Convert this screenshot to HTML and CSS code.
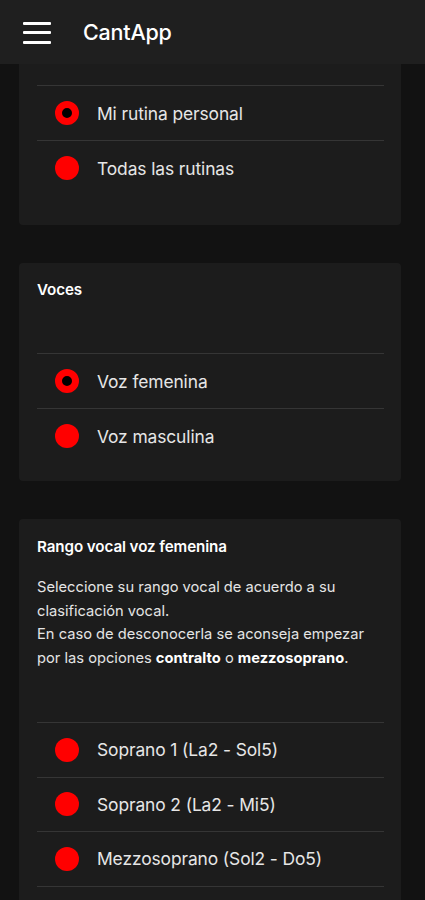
FILE: index.html
```html
<!DOCTYPE html>
<html lang="es">
<head>
<meta charset="utf-8">
<title>CantApp</title>
<link rel="stylesheet" href="styles.css">
</head>
<body>
<header class="toolbar">
  <button class="menu-btn" aria-label="Menú">
    <span class="bar"></span><span class="bar"></span><span class="bar"></span>
  </button>
  <h1 class="app-title">CantApp</h1>
</header>
<main class="content">
  <section class="card card-routines">
    <ul class="radio-list">
      <li class="radio-row"><span class="radio checked"></span><span class="label">Mi rutina personal</span></li>
      <li class="radio-row"><span class="radio"></span><span class="label">Todas las rutinas</span></li>
    </ul>
  </section>

  <section class="card card-voices">
    <h2 class="card-title">Voces</h2>
    <ul class="radio-list">
      <li class="radio-row"><span class="radio checked"></span><span class="label">Voz femenina</span></li>
      <li class="radio-row"><span class="radio"></span><span class="label">Voz masculina</span></li>
    </ul>
  </section>

  <section class="card card-range">
    <h2 class="card-title">Rango vocal voz femenina</h2>
    <p class="card-desc">Seleccione su rango vocal de acuerdo a su clasificación vocal.<br>En caso de desconocerla se aconseja empezar por las opciones <b class="em">contralto</b> o <b class="em">mezzosoprano</b>.</p>
    <ul class="radio-list open-end">
      <li class="radio-row"><span class="radio"></span><span class="label">Soprano 1 (La2 - Sol5)</span></li>
      <li class="radio-row"><span class="radio"></span><span class="label">Soprano 2 (La2 - Mi5)</span></li>
      <li class="radio-row"><span class="radio"></span><span class="label">Mezzosoprano (Sol2 - Do5)</span></li>
    </ul>
  </section>
</main>
</body>
</html>
```

FILE: styles.css
```css
* { box-sizing: border-box; }

html, body {
  margin: 0;
  padding: 0;
}

body {
  background: #121212;
  color: #ececec;
  font-family: "Inter", "Roboto", "Liberation Sans", sans-serif;
  height: 900px;
  overflow: hidden;
}

.toolbar {
  height: 64px;
  background: #1f1f1f;
  display: flex;
  align-items: center;
  padding-left: 23px;
  gap: 32px;
}

.menu-btn {
  width: 28px;
  height: 22px;
  padding: 0;
  border: 0;
  background: transparent;
  display: flex;
  flex-direction: column;
  justify-content: space-between;
  margin-top: 1px;
}

.menu-btn .bar {
  display: block;
  height: 3px;
  width: 28px;
  background: #ffffff;
  border-radius: 1px;
}

.app-title {
  margin: 0;
  font-size: 21.5px;
  font-weight: 500;
  color: #ffffff;
  letter-spacing: -0.2px;
}

.content {
  padding: 0 24px 0 19px;
  display: flex;
  flex-direction: column;
  gap: 38px;
}

.card {
  background: #1c1c1c;
  border-radius: 4px;
  padding: 18px 17px 18px 18px;
}

.card-routines {
  border-radius: 0 0 4px 4px;
  padding-top: 21px;
  padding-bottom: 30px;
}

.card-voices {
  padding-top: 18px;
  padding-bottom: 18px;
}

.card-title {
  margin: 0;
  font-size: 15.2px;
  line-height: 18px;
  font-weight: 600;
  color: #ffffff;
  letter-spacing: -0.1px;
}

.card-voices .card-title {
  margin-bottom: 54px;
}

.card-range {
  padding-top: 19px;
  padding-bottom: 60px;
}

.card-desc {
  margin: 20px 0 52px;
  font-size: 14.7px;
  line-height: 23.5px;
  color: #e4e4e4;
}

.card-desc .em {
  font-weight: 700;
  color: #ffffff;
}

.radio-list {
  list-style: none;
  margin: 0;
  padding: 0;
}

.radio-list.open-end {
  border-bottom: 1px solid #353535;
}

.radio-row {
  display: flex;
  align-items: center;
  gap: 18px;
  height: 55px;
  padding-left: 18px;
  border-top: 1px solid #353535;
}

.card-range .radio-row {
  height: 54.5px;
}

.radio {
  width: 24px;
  height: 24px;
  border-radius: 50%;
  background: #ff0000;
  flex: none;
}

.radio.checked {
  background: #000000;
  border: 7px solid #ff0000;
}

.label {
  font-size: 17.4px;
  color: #e6e6e6;
  letter-spacing: -0.1px;
}
```
